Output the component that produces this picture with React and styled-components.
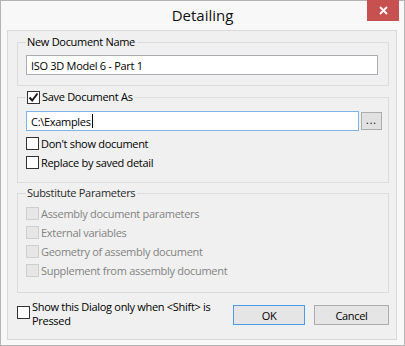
import React from "react";
import styled, { createGlobalStyle } from "styled-components";

const Global = createGlobalStyle`
  html, body { margin: 0; padding: 0; background: #ffffff; }
  body { font-family: "Open Sans", "Noto Sans", sans-serif; }
`;

const Window = styled.div`
  box-sizing: border-box;
  width: 405px;
  height: 346px;
  border: 1px solid #b4b4b4;
  background: #f8f8f8;
  display: flex;
  flex-direction: column;
  font-family: "Open Sans", "Noto Sans", sans-serif;
  font-size: 11px;
  letter-spacing: -0.3px;
  color: #000;
`;

const TitleBar = styled.div`
  height: 29px;
  flex: none;
  display: flex;
  align-items: flex-start;
  justify-content: center;
  position: relative;
`;

const Title = styled.div`
  font-size: 15px;
  letter-spacing: 0;
  line-height: 18px;
  margin-top: 5px;
  color: #111;
`;

const CloseButton = styled.div`
  position: absolute;
  top: -1px;
  right: 5px;
  width: 32px;
  height: 21px;
  background: #c75050;
  display: flex;
  align-items: center;
  justify-content: center;
`;

const Client = styled.div`
  box-sizing: border-box;
  margin: 0 6px 0 6px;
  width: 390px;
  height: 310px;
  border: 1px solid #d9d9d9;
  background: #f0f0f0;
  padding: 3px 7px 0 9px;
  display: flex;
  flex-direction: column;
`;

const Group = styled.fieldset`
  box-sizing: border-box;
  margin: 0 0 ${(p) => p.$gap || 0}px 0;
  width: 372px;
  border: 1px solid #dcdcdc;
  padding: ${(p) => p.$pt}px 0 ${(p) => p.$pb}px 8px;
  min-width: 0;
  display: flex;
  flex-direction: column;
`;

const Legend = styled.legend`
  padding: 0 2px 0 1px;
  margin-left: 0;
  height: 16px;
  line-height: 16px;
  display: flex;
  align-items: center;
  gap: 2px;
  color: ${(p) => (p.$muted ? "#2a2a2a" : "#000")};
`;

const TextInput = styled.div`
  box-sizing: border-box;
  height: 20px;
  width: ${(p) => p.$w}px;
  background: #fff;
  border: 1px solid ${(p) => (p.$focus ? "#7eb4ea" : "#abadb3")};
  padding: 0 4px;
  display: flex;
  align-items: center;
  white-space: pre;
`;

const Caret = styled.span`
  display: inline-block;
  width: 1px;
  height: 14px;
  background: #000;
  margin-left: 1px;
`;

const InputRow = styled.div`
  display: flex;
  align-items: center;
  gap: 2px;
  margin-bottom: 3px;
`;

const BrowseButton = styled.div`
  box-sizing: border-box;
  width: 21px;
  height: 18px;
  border: 1px solid #adadad;
  background: #e1e1e1;
  display: flex;
  align-items: center;
  justify-content: center;
  font-size: 10px;
  letter-spacing: 1px;
  padding-bottom: 2px;
`;

const CheckRow = styled.div`
  height: 19px;
  display: flex;
  align-items: center;
  gap: 2px;
  color: ${(p) => (p.$disabled ? "#838383" : "#000")};
`;

const Box = styled.span`
  box-sizing: border-box;
  flex: none;
  width: 13px;
  height: 13px;
  border: 1px solid ${(p) => (p.$disabled ? "#cfcfcf" : "#333")};
  background: ${(p) => (p.$disabled ? "#e6e6e6" : "#fff")};
  display: flex;
  align-items: center;
  justify-content: center;
`;

const Footer = styled.div`
  margin-top: 12px;
  display: flex;
  align-items: flex-start;
`;

const FooterCheck = styled.div`
  display: flex;
  align-items: flex-start;
  gap: 2px;
  flex: 1;
  padding-top: 1px;
`;

const FooterText = styled.div`
  line-height: 14px;
  margin-top: -6px;
`;

const Button = styled.div`
  box-sizing: border-box;
  width: ${(p) => p.$w}px;
  height: 20px;
  margin-left: ${(p) => p.$ml || 0}px;
  border: 1px solid ${(p) => (p.$default ? "#4d9be6" : "#acacac")};
  background: #e5e5e5;
  display: flex;
  align-items: center;
  justify-content: center;
`;

const Check = () => (
  <svg width="11" height="11" viewBox="0 0 11 11">
    <path d="M1.5 5.5 L4.2 8.5 L9.5 1.5" fill="none" stroke="#1a1a1a" strokeWidth="2" />
  </svg>
);

const CheckBox = ({ checked, disabled, children }) => (
  <CheckRow $disabled={disabled}>
    <Box $disabled={disabled}>{checked && <Check />}</Box>
    <span>{children}</span>
  </CheckRow>
);

export default function App() {
  return (
    <>
      <Global />
      <Window>
        <TitleBar>
          <Title>Detailing</Title>
          <CloseButton>
            <svg width="9" height="9" viewBox="0 0 9 9">
              <path d="M1 1 L8 8 M8 1 L1 8" stroke="#fff" strokeWidth="1.8" />
            </svg>
          </CloseButton>
        </TitleBar>
        <Client>
          <Group $pt={5} $pb={10} $gap={3}>
            <Legend>New Document Name</Legend>
            <TextInput $w={352}>ISO 3D Model 6 - Part 1</TextInput>
          </Group>
          <Group $pt={6} $pb={10} $gap={2}>
            <Legend>
              <Box>
                <Check />
              </Box>
              Save Document As
            </Legend>
            <InputRow>
              <TextInput $w={333} $focus>
                C:\Examples
                <Caret />
              </TextInput>
              <BrowseButton>...</BrowseButton>
            </InputRow>
            <CheckBox>Don't show document</CheckBox>
            <CheckBox>Replace by saved detail</CheckBox>
          </Group>
          <Group $pt={3} $pb={12}>
            <Legend $muted>Substitute Parameters</Legend>
            <CheckBox disabled>Assembly document parameters</CheckBox>
            <CheckBox disabled>External variables</CheckBox>
            <CheckBox disabled>Geometry of assembly document</CheckBox>
            <CheckBox disabled>Supplement from assembly document</CheckBox>
          </Group>
          <Footer>
            <FooterCheck>
              <Box />
              <FooterText>
                Show this Dialog only when &lt;Shift&gt; is
                <br />
                Pressed
              </FooterText>
            </FooterCheck>
            <Button $w={72} $default>
              OK
            </Button>
            <Button $w={75} $ml={9}>
              Cancel
            </Button>
          </Footer>
        </Client>
      </Window>
    </>
  );
}
